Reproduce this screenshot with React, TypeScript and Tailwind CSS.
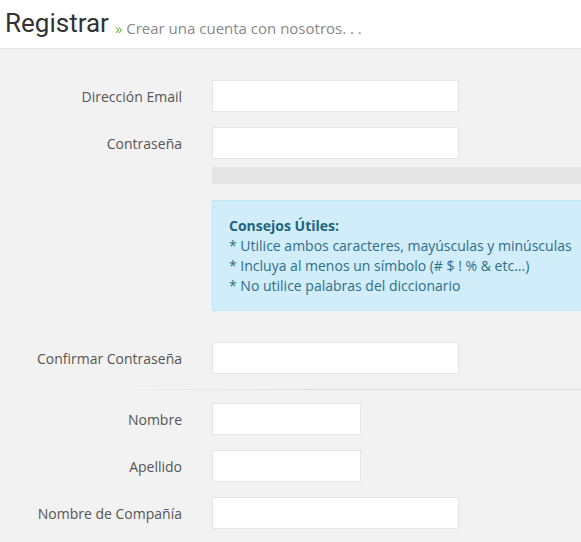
function Field({ label, width = "w-[247px]", className = "" }: { label: string; width?: string; className?: string }) {
  return (
    <div className={`flex items-center ${className}`}>
      <label className="w-[182px] text-right text-[14px] text-[#555]">{label}</label>
      <input type="text" className={`ml-[30px] h-[32px] ${width} border border-[#e6e6e6] bg-white px-2 text-sm outline-none`} />
    </div>
  )
}

export default function App() {
  return (
    <div className="min-h-[542px] overflow-hidden bg-[#f2f2f2] font-['Open_Sans',sans-serif]">
      <div className="flex h-[49px] items-end border-b border-[#e5e5e5] bg-white pb-[12px] pl-[5px]">
        <h1 className="font-['Roboto',sans-serif] text-[26px] leading-none text-[#333]">Registrar</h1>
        <span className="ml-[6px] text-[15px] leading-none text-[#888]">
          <span className="text-[#7cb342]">»</span> Crear una cuenta con nosotros. . .
        </span>
      </div>

      <div className="pt-[31px]">
        <Field label="Dirección Email" />
        <Field label="Contraseña" className="mt-[15px]" />
        <div className="ml-[212px] mt-[8px] h-[17px] bg-[#e6e6e6]" />
        <div className="ml-[212px] mt-[16px] h-[111px] w-[420px] border border-[#bfe6f3] bg-[#d0edf9] px-[16px] pt-[15px] text-[14px] leading-[20px] whitespace-nowrap text-[#2f6d8a]">
          <p className="font-bold text-[#1d6480]">Consejos Útiles:</p>
          <p>* Utilice ambos caracteres, mayúsculas y minúsculas</p>
          <p>* Incluya al menos un símbolo (# $ ! % &amp; etc...)</p>
          <p>* No utilice palabras del diccionario</p>
        </div>
        <Field label="Confirmar Contraseña" className="mt-[31px]" />
        <div className="ml-[90px] mt-[15px] h-px bg-gradient-to-r from-transparent via-[#dcdcdc] to-[#dcdcdc]" />
        <Field label="Nombre" width="w-[149px]" className="mt-[13px]" />
        <Field label="Apellido" width="w-[149px]" className="mt-[15px]" />
        <Field label="Nombre de Compañía" className="mt-[15px]" />
      </div>
    </div>
  )
}
